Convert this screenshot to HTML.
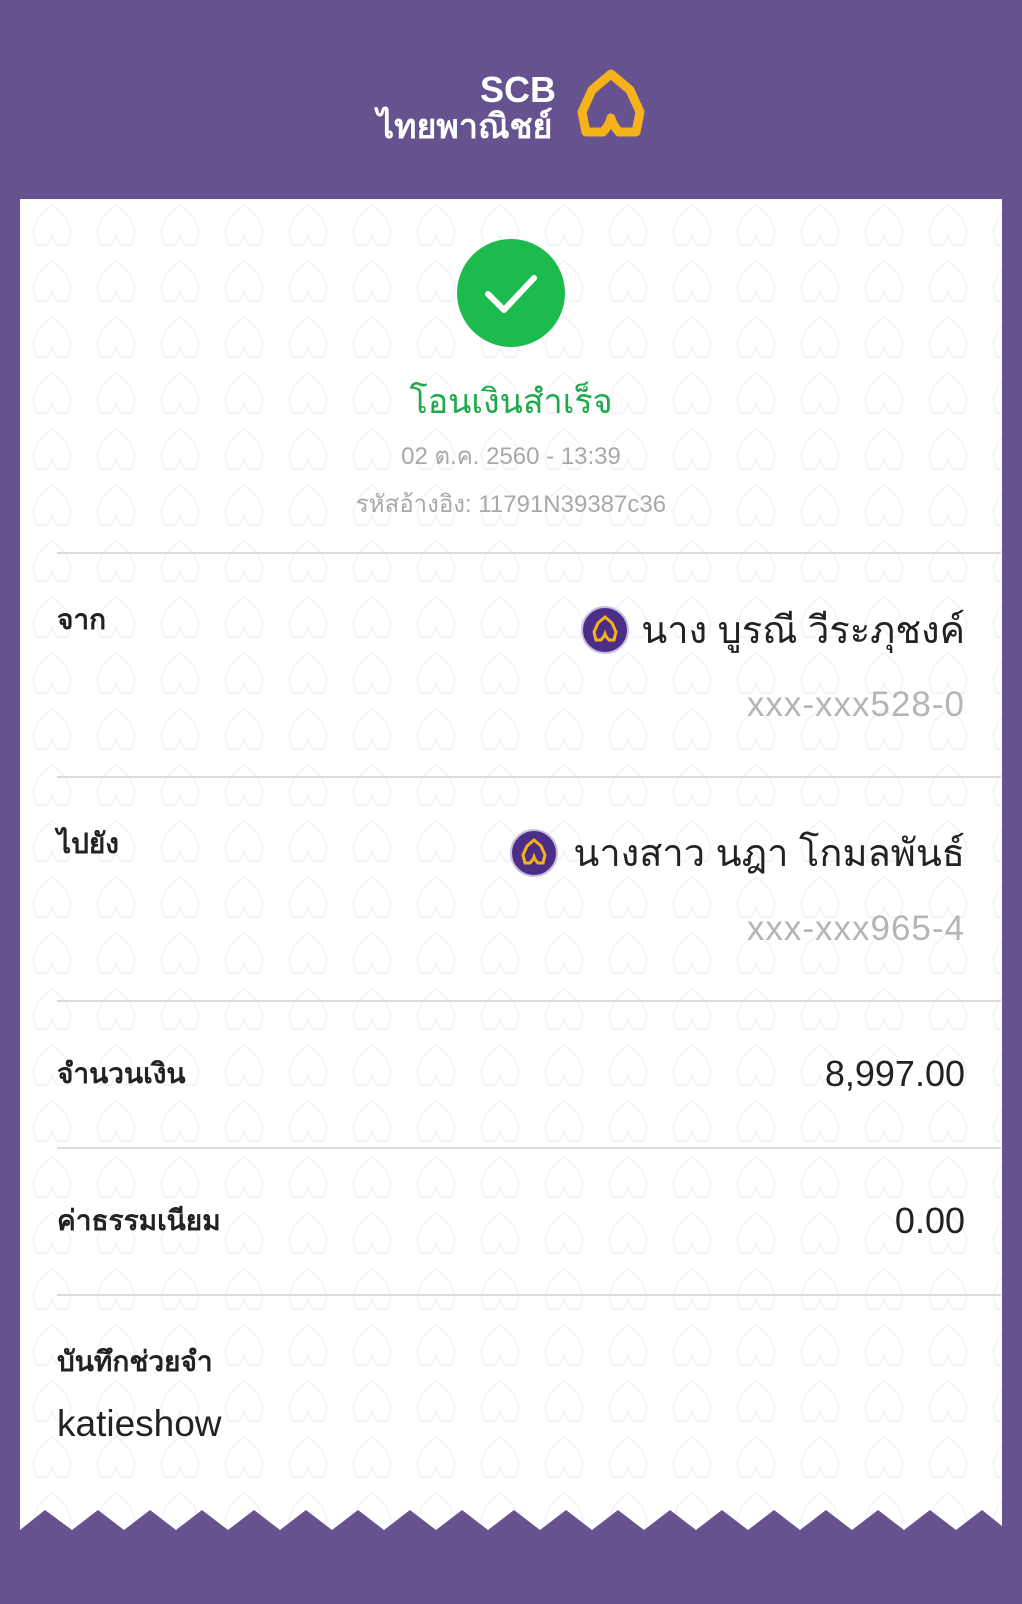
<!DOCTYPE html>
<html><head><meta charset="utf-8"><style>
*{margin:0;padding:0;box-sizing:border-box}
body{width:1022px;height:1604px;background:#65528f;position:relative;overflow:hidden;font-family:"Liberation Sans","Noto Sans CJK SC",sans-serif}
.t{position:absolute;white-space:nowrap;line-height:1}
.card{position:absolute;left:20px;top:199px;width:982px;height:1332px;background:#fff}
.line{position:absolute;left:57px;width:944px;height:2px;background:#dcdce0}
.lab{left:57px;font-size:28px;color:#222;font-weight:bold}
.r{right:57px;text-align:right}
.acct{font-size:35px;color:#b5b5b8;letter-spacing:1px}
.name{font-size:38px;color:#222}
</style></head><body>
<div class="t" style="left:480px;top:72px;font-size:36px;font-weight:bold;color:#fff">SCB</div>
<div class="t" style="left:377px;top:110px;font-size:34px;font-weight:bold;color:#fff">ไทยพาณิชย์</div>
<svg style="position:absolute;left:574px;top:68px" width="74" height="72" viewBox="0 0 74 72"><path d="M37 6 L56 22 L66 44 L62 64 L45 64 Q38 56 37 50 Q36 56 29 64 L12 64 L8 44 L18 22 Z" fill="none" stroke="#f5b21b" stroke-width="9" stroke-linejoin="round"/></svg>
<div class="card">
<svg width="982" height="1332" style="position:absolute;left:0;top:0"><defs><pattern id="p" width="64" height="56" patternUnits="userSpaceOnUse"><path d="M32 6 L45 17 L51 32 L48 46 L38 46 Q33 41 32 36 Q31 41 26 46 L16 46 L13 32 L19 17 Z" fill="none" stroke="#f6f4fa" stroke-width="2"/></pattern></defs><rect width="982" height="1332" fill="url(#p)"/></svg>
</div>
<svg style="position:absolute;left:20px;top:1508px" width="982" height="26"><path d="M0 22 L25 2 L52 22 L78 2 L104 22 L130 2 L156 22 L182 2 L208 22 L234 2 L260 22 L286 2 L312 22 L338 2 L364 22 L390 2 L416 22 L442 2 L468 22 L494 2 L520 22 L546 2 L572 22 L598 2 L624 22 L650 2 L676 22 L702 2 L728 22 L754 2 L780 22 L806 2 L832 22 L858 2 L884 22 L910 2 L936 22 L962 2 L982 18 L982 26 L0 26Z" fill="#65528f"/></svg>
<svg style="position:absolute;left:457px;top:239px" width="108" height="108"><circle cx="54" cy="54" r="54" fill="#1dbb4d"/><path d="M31 55 L47 71 L77 39" fill="none" stroke="#fff" stroke-width="6" stroke-linecap="round" stroke-linejoin="round"/></svg>
<div class="t" style="left:0;width:1022px;text-align:center;top:385px;font-size:34px;color:#1daa4a">โอนเงินสำเร็จ</div>
<div class="t" style="left:0;width:1022px;text-align:center;top:445px;font-size:24px;color:#a8a8ab">02 ต.ค. 2560 - 13:39</div>
<div class="t" style="left:0;width:1022px;text-align:center;top:493px;font-size:24px;color:#a8a8ab">รหัสอ้างอิง: 11791N39387c36</div>
<div class="line" style="top:552px"></div>
<div class="t lab" style="top:606px">จาก</div>
<svg style="position:absolute;left:581px;top:606px" width="48" height="48"><circle cx="24" cy="24" r="23" fill="#4d2e86" stroke="#c8bfe0" stroke-width="2"/><path d="M24 11 L31 17 L35 26 L33 34 L28 34 Q25 31 24 28 Q23 31 20 34 L15 34 L13 26 L17 17 Z" fill="none" stroke="#f5b21b" stroke-width="3"/></svg>
<div class="t name r" style="top:612px">นาง บูรณี วีระภุชงค์</div>
<div class="t acct r" style="top:687px">xxx-xxx528-0</div>
<div class="line" style="top:776px"></div>
<div class="t lab" style="top:830px">ไปยัง</div>
<svg style="position:absolute;left:510px;top:829px" width="48" height="48"><circle cx="24" cy="24" r="23" fill="#4d2e86" stroke="#c8bfe0" stroke-width="2"/><path d="M24 11 L31 17 L35 26 L33 34 L28 34 Q25 31 24 28 Q23 31 20 34 L15 34 L13 26 L17 17 Z" fill="none" stroke="#f5b21b" stroke-width="3"/></svg>
<div class="t name r" style="top:835px">นางสาว นฎา โกมลพันธ์</div>
<div class="t acct r" style="top:911px">xxx-xxx965-4</div>
<div class="line" style="top:1000px"></div>
<div class="t lab" style="top:1060px">จำนวนเงิน</div>
<div class="t r" style="top:1056px;font-size:36px;color:#222">8,997.00</div>
<div class="line" style="top:1147px"></div>
<div class="t lab" style="top:1207px">ค่าธรรมเนียม</div>
<div class="t r" style="top:1203px;font-size:36px;color:#222">0.00</div>
<div class="line" style="top:1294px"></div>
<div class="t lab" style="top:1348px">บันทึกช่วยจำ</div>
<div class="t" style="left:57px;top:1405px;font-size:37px;color:#222">katieshow</div>
</body></html>
